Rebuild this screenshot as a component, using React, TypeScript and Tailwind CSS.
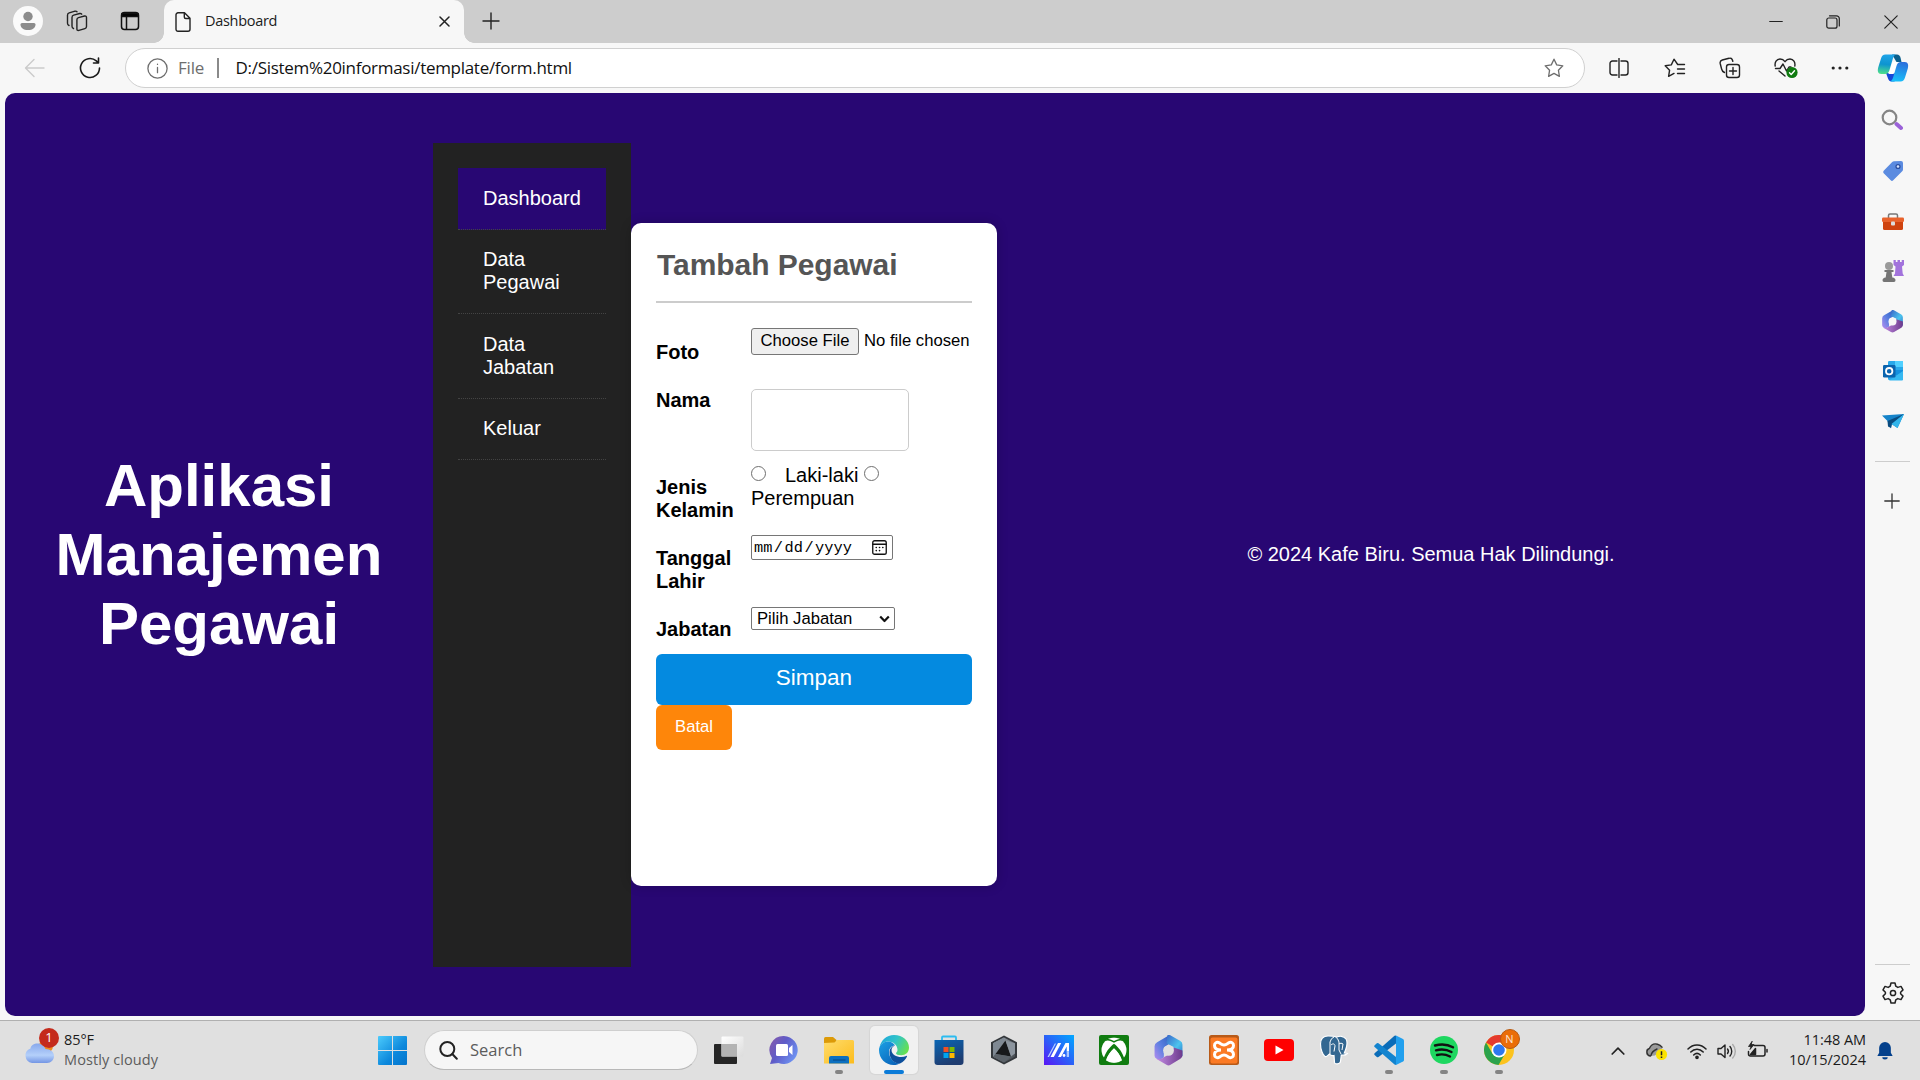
import React from "react";

const ui = "font-['Open_Sans',sans-serif]";
const arial = "font-['Liberation_Sans',sans-serif]";

type IconProps = { w?: number; h?: number; vb?: string; className?: string; sw?: number; color?: string; children: React.ReactNode };
function Line({ w = 24, h, vb = "0 0 24 24", className = "", sw = 1.4, color = "#222", children }: IconProps) {
  return (
    <svg width={w} height={h ?? w} viewBox={vb} className={`shrink-0 ${className}`} fill="none" stroke={color} strokeWidth={sw} strokeLinecap="round" strokeLinejoin="round">
      {children}
    </svg>
  );
}
function Pic({ w = 30, vb = "0 0 30 30", className = "", children }: IconProps) {
  return (
    <svg width={w} height={w} viewBox={vb} className={`shrink-0 ${className}`}>
      {children}
    </svg>
  );
}

function TabBar() {
  return (
    <div className="flex h-[43px] w-full bg-[#cdcdcd]">
      <div className="flex w-[164px] items-center pb-px pl-[13px]">
        <Pic w={30}>
          <circle cx="15" cy="15" r="15" fill="#fafafa" />
          <circle cx="15" cy="10.500" r="4.700" fill="#8c8c8c" />
          <path d="M7.500 18.500a1.500 1.500 0 0 1 1.500-1.500h12a1.500 1.500 0 0 1 1.500 1.500c0 3.500-3 5.500-7.500 5.500s-7.500-2-7.500-5.500z" fill="#8c8c8c" />
        </Pic>
        <Line w={22} vb="0 0 22 22" className="ml-[23px]" sw={1.400}>
          <path d="M12.500 7.600l6-1.600q2-.4 2 1.600v8.800q0 1.700-1.600 2.200l-6 1.800q-2 .5-2-1.500V9.800q0-1.700 1.600-2.200z" />
          <path d="M7.500 18.500q-1.500-.5-1.500-2.200V7.500q0-1.800 1.700-2.300l6-1.700q1.300-.3 2 .7" />
          <path d="M3 15.500q-1.500-.6-1.500-2.300V5.200q0-1.800 1.700-2.300l5.800-1.700q1.300-.3 2 .5" />
        </Line>
        <Line w={20} vb="0 0 20 20" className="ml-[32px]" sw={1.500} color="#111">
          <rect x="1.500" y="1.500" width="17" height="17" rx="3" />
          <path d="M2 2.500h16v3h-16z" fill="#000" />
          <path d="M6.500 6v12" />
        </Line>
      </div>
      <div className="relative flex w-[300px] items-center rounded-t-[10px] bg-[#f7f7f7] pr-[14px] pl-[11px]">
        <span className="absolute bottom-0 -left-[10px] size-[10px] bg-[radial-gradient(circle_at_0_0,#cdcdcd_9.500px,#f7f7f7_10px)]" />
        <span className="absolute -right-[10px] bottom-0 size-[10px] bg-[radial-gradient(circle_at_100%_0,#cdcdcd_9.500px,#f7f7f7_10px)]" />
        <Line w={16} h={20} vb="0 0 16 20" sw={1.400}>
          <path d="M3 .8h6.500l5.500 5.500v11a2 2 0 0 1-2 2H3a2 2 0 0 1-2-2V2.800a2 2 0 0 1 2-2zM9.300 1v4a1.500 1.500 0 0 0 1.500 1.500h4" />
        </Line>
        <span className={`${ui} mb-[2px] ml-[14px] flex-1 text-[14.500px] leading-5 tracking-[-0.300px] text-[#1b1b1b]`}>Dashboard</span>
        <Line w={11} vb="0 0 11 11" sw={1.500}>
          <path d="M1 1l9 9M10 1l-9 9" />
        </Line>
      </div>
      <div className="flex flex-1 items-center pb-[2px] pl-[18px]">
        <Line w={18} vb="0 0 18 18" sw={1.400}>
          <path d="M9 1v16M1 9h16" />
        </Line>
      </div>
      <div className="flex items-center pr-[22px]">
        <Line w={14} vb="0 0 14 14" sw={1.100} className="mr-[43px]">
          <path d="M.7 6.500h12.600" />
        </Line>
        <Line w={14} vb="0 0 14 14" sw={1.200} className="mr-[44px]">
          <rect x=".8" y="3" width="10.200" height="10.200" rx="2" />
          <path d="M3.500.8h7a2.800 2.800 0 0 1 2.800 2.800V11" />
        </Line>
        <Line w={14} vb="0 0 14 14" sw={1.200}>
          <path d="M.8.8l12.400 12.400M13.200.8L.8 13.200" />
        </Line>
      </div>
    </div>
  );
}

const STAR = "M10 1.200l2.700 5.700 6.100.9-4.400 4.400 1 6.200L10 15.400l-5.400 3 1-6.200L1.200 7.800l6.100-.9z";

function Toolbar() {
  return (
    <div className="flex h-[50px] w-full items-center bg-[#f7f7f7]">
      <div className="flex w-[125px] items-center pb-px pl-6">
        <Line w={22} vb="0 0 22 22" color="#cbcbcb">
          <path d="M20 11H2M10 2.500L1.500 11l8.500 8.500" />
        </Line>
        <Line w={22} vb="0 0 22 22" className="ml-[33px]" sw={1.600} color="#1b1b1b">
          <path d="M20.500 11a9.500 9.500 0 1 1-3.200-7.100l1.700 1.600M19.500 1v5h-5" />
        </Line>
      </div>
      <div className="flex h-10 w-[1460px] items-center rounded-full border border-[#d0d0d0] bg-white pr-[20px] pl-[21px]">
        <Line w={21} vb="0 0 21 21" sw={1.300} color="#6e6e6e">
          <circle cx="10.500" cy="10.500" r="9.600" />
          <path d="M10.500 9.500v5.200M10.500 6.200v.2" />
        </Line>
        <span className={`${ui} mb-px ml-[10px] w-[39px] text-[17px] tracking-[-0.200px] text-[#6e6e6e]`}>File</span>
        <span className="h-5 w-[1.500px] bg-[#8a8a8a]" />
        <span className={`${ui} mb-px ml-[17px] flex-1 text-[17px] tracking-[-0.290px] text-[#111]`}>D:/Sistem%20informasi/template/form.html</span>
        <Line w={20} vb="0 0 20 20" color="#6e6e6e" sw={1.300}>
          <path d={STAR} />
        </Line>
      </div>
      <div className="flex flex-1 items-center pb-px pl-[24px]">
        <Line w={20} vb="0 0 20 20">
          <path d="M8 3H3.500a2.500 2.500 0 0 0-2.500 2.500v9A2.500 2.500 0 0 0 3.500 17H8M12 3h4.500A2.500 2.500 0 0 1 19 5.500v9a2.500 2.500 0 0 1-2.500 2.500H12M10 .5v19" />
        </Line>
        <Line w={22} vb="0 0 22 20" className="ml-[35px]">
          <path d="M20.500 6.500h-6.800L10 1.200 7.300 6.900l-6.100.9 4.400 4.400-1 6.200 5.400-3M13.500 11h7M13.500 15.500h7" />
        </Line>
        <Line w={22} vb="0 0 22 22" className="ml-[33px]">
          <path d="M5.500 15.500C3.500 14.500 3 14 2.600 12L1.200 6.500C.8 4.500 1.500 3.500 3.300 3L10 1.300c1.800-.5 3 .2 3.500 2l.3 1" />
          <rect x="7.500" y="7.500" width="13" height="13" rx="2.500" />
          <path d="M14 10.500v7M10.500 14h7" />
        </Line>
        <Line w={24} vb="0 0 24 22" className="ml-[33px]">
          <path d="M1.200 9C.5 5.500 2.500 2 6 2c2.200 0 3.800 1 5 2.700C12.200 3 13.800 2 16 2c3.500 0 5.500 3.500 4.800 7M1.500 11.500h4.500L9 7l3.500 7 2.500-4h2M5 14l6 5" />
          <circle cx="18" cy="15.500" r="5.600" fill="#0f7b10" stroke="none" />
          <path d="M15.500 15.800l1.700 1.700 3.300-3.700" stroke="#fff" />
        </Line>
        <Pic w={18} vb="0 0 18 18" className="ml-[33px]">
          <circle cx="2.200" cy="9" r="1.600" fill="#222" />
          <circle cx="9" cy="9" r="1.600" fill="#222" />
          <circle cx="15.800" cy="9" r="1.600" fill="#222" />
        </Pic>
        <Copilot />
      </div>
    </div>
  );
}

function Copilot() {
  return (
    <svg width="32" height="28" viewBox="0 0 32 28" className="ml-[28px] shrink-0">
      <defs>
        <linearGradient id="cpA" x1=".4" y1="0" x2=".3" y2="1">
          <stop offset="0" stopColor="#1fa4e8" />
          <stop offset=".5" stopColor="#0d94d0" />
          <stop offset="1" stopColor="#4fe08a" />
        </linearGradient>
        <linearGradient id="cpB" x1=".6" y1="0" x2=".4" y2="1">
          <stop offset="0" stopColor="#2a6fdc" />
          <stop offset="1" stopColor="#18c0fa" />
        </linearGradient>
      </defs>
      <path d="M15 .5h5c2 0 3 1.200 3.600 3.500L24.500 8h-5z" fill="#0b5f8c" />
      <path d="M9 19l2 5.500c.7 2 1.800 3 3.500 3h3l3-8z" fill="#1648d8" />
      <path d="M15.500 8h5l-4 12h-5z" fill="#fff" />
      <path d="M8.500.5h10.200c-1.500.8-2.200 2.200-2.800 4L12.500 16c-.8 2.800-2 4-4.500 4H4.200C.8 20 .3 17 1.200 13.500L4 4.500C4.800 1.800 6 .5 8.500.5z" fill="url(#cpA)" />
      <path d="M23.500 27.500H13.300c1.500-.8 2.200-2.200 2.800-4L19.500 12c.8-2.800 2-4 4.500-4h3.800c3.400 0 3.900 3 3 6.500L28 23.500c-.8 2.700-2 4-4.500 4z" fill="url(#cpB)" />
    </svg>
  );
}

function Loop365({ w = 22, id, hole }: { w?: number; id: string; hole: string }) {
  return (
    <svg width={w} height={w} viewBox="0 0 30 30" className="shrink-0">
      <defs>
        <linearGradient id={`${id}a`} x1="1" y1="0" x2="0" y2="1">
          <stop offset="0" stopColor="#2c5fc0" />
          <stop offset=".5" stopColor="#5a7fe0" />
          <stop offset="1" stopColor="#b58cf0" />
        </linearGradient>
        <linearGradient id={`${id}b`} x1="0" y1="0" x2="1" y2="1">
          <stop offset="0" stopColor="#3a66c8" />
          <stop offset=".6" stopColor="#4cc4ee" />
          <stop offset="1" stopColor="#2c74c8" />
        </linearGradient>
        <linearGradient id={`${id}c`} x1="0" y1="0" x2="1" y2="0">
          <stop offset="0" stopColor="#c48ce4" />
          <stop offset="1" stopColor="#6c3a8c" />
        </linearGradient>
      </defs>
      <path d="M16 0L4 7Q1.500 8.500 1.500 11v9q0 2 2 3l3 1.500 4-3V12l6-4z" fill={`url(#${id}a)`} />
      <path d="M14 0q2-.3 4 .9l8.500 5q2 1.300 2 3.600v11L20 16v-4.500L13 8z" fill={`url(#${id}b)`} />
      <path d="M28.500 15v4.500q0 2.300-2 3.500L17 28.800q-2 1.200-4 0L3 23q5 1 7.500-1.500l9-5L20 12z" fill={`url(#${id}c)`} />
      <circle cx="15" cy="15" r="5.200" fill={hole} />
    </svg>
  );
}

function EdgeSidebar() {
  return (
    <aside className="flex w-[55px] flex-col items-center bg-[#f7f7f7] pt-[16px]">
      <Pic w={22} vb="0 0 22 22" className="-ml-px">
        <circle cx="8.500" cy="8.500" r="6.800" fill="none" stroke="#858585" strokeWidth="2.200" />
        <path d="M15.500 15l4.500 4" stroke="#9b62d8" strokeWidth="4" strokeLinecap="round" />
      </Pic>
      <Pic w={22} vb="0 0 22 22" className="mt-[29px]">
        <path d="M12 1.200L19 1q2 0 2 2v6.500q0 1-.8 1.800l-9 9q-1.200 1.200-2.500 0l-7-7q-1.200-1.300 0-2.500l8.500-8.800q.8-.8 1.800-.8z" fill="#5b8be0" />
        <circle cx="16" cy="6.500" r="2.600" fill="#2c4fa0" />
        <circle cx="16" cy="6.500" r="1.300" fill="#d7e4ff" />
      </Pic>
      <Pic w={22} vb="0 0 22 22" className="mt-[29px]">
        <path d="M6.500 7V4.500Q6.500 3 8 3h6q1.500 0 1.500 1.500V7" fill="none" stroke="#777" strokeWidth="1.500" />
        <rect y="6.500" width="22" height="4.500" rx="1.200" fill="#e8622c" />
        <path d="M1 11h20v6.500q0 1.500-1.500 1.500h-17Q1 19 1 17.500z" fill="#cf430f" />
        <rect x="9" y="10.500" width="4" height="4" rx="1" fill="#ddd" />
      </Pic>
      <Pic w={24} vb="0 0 24 24" className="mt-[26px]">
        <path d="M12.500 1h2.300v2h1.700V1h2.500v2h1.700V1H23v5l-2 1.500.7 7L23 17H12.500l1.500-2.500.5-7-2-1.500z" fill="#a273dc" />
        <circle cx="8" cy="7" r="4" fill="#9a9a9a" />
        <path d="M3.500 11h9v2h-2l.8 5.500q3.200.5 3.200 2.700Q14.500 23 13 23H3q-1.500 0-1.500-1.800 0-2.200 3.200-2.700L5.500 13h-2z" fill="#757575" />
      </Pic>
      <div className="mt-[27px]">
        <Loop365 w={23} id="s" hole="#f7f7f7" />
      </div>
      <Pic w={22} vb="0 0 22 22" className="mt-[27px]">
        <rect x="6" y="1" width="15" height="19" rx="1.200" fill="#28a8ea" />
        <path d="M13 1h8v6h-8z" fill="#50d0ff" />
        <path d="M6 10l15 10V10z" fill="#1490df" />
        <path d="M7 20.500L21 11v8.500q0 1-1 1z" fill="#35b8f1" />
        <rect x="1" y="5" width="12.500" height="12.500" rx="1.200" fill="#0a64ae" />
        <circle cx="7.200" cy="11.200" r="3.200" fill="none" stroke="#fff" strokeWidth="1.800" />
      </Pic>
      <Pic w={22} vb="0 0 22 22" className="mt-[28px]">
        <path d="M0 5.500L22 4l-6.500 14-6-4L9 18.500 5.500 11z" fill="#1583c9" />
        <path d="M22 4L5.500 11 6 16.500l3 1.500 1-4z" fill="#0a4c80" />
        <path d="M22 4l-6.500 14-6-4z" fill="#32b4ea" />
      </Pic>
      <div className="mt-[29px] h-px w-[35px] bg-[#cdcdcd]" />
      <Line w={16} vb="0 0 16 16" sw={1.300} className="mt-[31px] -ml-[2px]" color="#333">
        <path d="M8 .8v14.400M.8 8h14.400" />
      </Line>
      <div className="mt-auto h-px w-[35px] bg-[#cdcdcd]" />
      <Line w={22} vb="0 0 22 22" className="mt-[17px] mb-[16px]" sw={1.500}>
        <path d="M9 1h4l.8 3.200 2 1.200 3.200-1 2 3.500-2.400 2.300v1.600l2.400 2.300-2 3.500-3.200-1-2 1.200L13 21H9l-.8-3.200-2-1.200-3.200 1-2-3.500 2.400-2.300v-1.600L1 7.900l2-3.500 3.200 1 2-1.200z" />
        <circle cx="11" cy="11" r="2.600" />
      </Line>
    </aside>
  );
}

const MENU = ["Dashboard", "Data Pegawai", "Data Jabatan", "Keluar"];

function Label({ children, className = "" }: { children: React.ReactNode; className?: string }) {
  return <div className={`w-[95px] shrink-0 text-[20px] leading-[23px] font-bold text-black ${className}`}>{children}</div>;
}
function Radio({ className = "" }: { className?: string }) {
  return <span className={`inline-block size-[15px] shrink-0 rounded-full border border-[#6f6f6f] bg-white ${className}`} />;
}

function FormCard() {
  return (
    <section className="flex h-[663px] w-[366px] flex-col rounded-[10px] bg-white px-[25px] shadow-[0_0_12px_rgba(0,0,0,0.200)]">
      <h2 className="mt-[25px] h-[53px] pl-[1px] text-[30px] leading-[33px] font-bold tracking-[-0.050px] text-[#555]">Tambah Pegawai</h2>
      <div className="h-[2px] shrink-0 bg-[#ccc]" />
      <div className="flex h-[86px] shrink-0">
        <Label className="pt-[38px]">Foto</Label>
        <div className="flex pt-[25px] text-[16.670px] leading-[25px] whitespace-nowrap text-black">
          <span className="mr-[5px] h-[27px] w-[108px] rounded-[3px] border border-[#767676] bg-[#efefef] text-center leading-[24px]">Choose File</span>
          <span>No file chosen</span>
        </div>
      </div>
      <div className="flex h-[76px] shrink-0">
        <Label>Nama</Label>
        <div className="h-[62px] w-[158px] rounded-[5px] border border-[#ccc]" />
      </div>
      <div className="flex h-[70px] shrink-0 text-black">
        <Label className="pt-[11px]">
          Jenis
          <br />
          Kelamin
        </Label>
        <div className="-mt-px text-[20px] leading-[23px]">
          <div className="flex whitespace-nowrap">
            <Radio className="mt-[2px] mr-[19px]" />
            Laki-laki
            <Radio className="mt-[2px] ml-[6px]" />
          </div>
          <div>Perempuan</div>
        </div>
      </div>
      <div className="flex h-[72px] shrink-0">
        <Label className="pt-[12px]">
          Tanggal
          <br />
          Lahir
        </Label>
        <div className="flex h-[25px] w-[142px] items-center justify-between rounded-[2px] border border-[#767676] pr-[5px] pl-[2px] text-black">
          <span className="flex gap-[1.500px] pt-px font-['Liberation_Mono',monospace] text-[15.300px] leading-[22px]">
            <span>mm</span>
            <span>/</span>
            <span>dd</span>
            <span>/</span>
            <span>yyyy</span>
          </span>
          <Line w={15} vb="0 0 16 16" sw={1.400} color="#111">
            <rect x=".8" y=".8" width="14.400" height="14.400" rx="2" />
            <path d="M1 4.500h14" />
            <path d="M4.500 11.300h.1M8 8h.1M11.500 8h.1M4.500 8h.1M8 11.300h.1" strokeWidth="1.700" />
          </Line>
        </div>
      </div>
      <div className="flex h-[47px] shrink-0">
        <Label className="pt-[11px]">Jabatan</Label>
        <div className="flex h-[23px] w-[144px] items-center justify-between rounded-[2px] border border-[#767676] pr-[4px] pl-[5px] text-[16.670px] leading-[21px] text-black">
          <span className="whitespace-nowrap">Pilih Jabatan</span>
          <Line w={11} h={8} vb="0 0 11 8" sw={2.200} color="#111">
            <path d="M1.200 1.500l4.300 4.500 4.300-4.500" strokeLinecap="butt" />
          </Line>
        </div>
      </div>
      <div className="h-[51px] shrink-0 rounded-[6px] bg-[#048ae0] pt-[11px] text-center text-[22.500px] leading-[26px] text-white">Simpan</div>
      <div className="h-[45px] w-[76px] shrink-0 rounded-[6px] bg-[#fe860a] pt-[12px] text-center text-[16.670px] leading-[19px] text-white">Batal</div>
    </section>
  );
}

function PageView() {
  return (
    <div className={`${arial} flex h-[923px] w-[1860px] items-center overflow-hidden rounded-[10px] bg-[#280773]`}>
      <h1 className="w-[428px] px-[50px] text-center text-[60px] leading-[69px] font-bold text-white">Aplikasi Manajemen Pegawai</h1>
      <nav className="mt-px h-[824px] w-[198px] bg-[#222] p-[25px]">
        {MENU.map((m, i) => (
          <div
            key={m}
            className={
              "border-b border-dotted border-[#444] px-[25px] py-[18.750px] text-[20px] leading-[23px] text-white " + (i === 0 ? "bg-[#280773]" : "")
            }
          >
            {m}
          </div>
        ))}
      </nav>
      <FormCard />
      <footer className="flex-1 text-center text-[20px] leading-[23px] text-white">© 2024 Kafe Biru. Semua Hak Dilindungi.</footer>
    </div>
  );
}

function TaskIcons() {
  const items: { icon: React.ReactNode; mark?: "active" | "open" }[] = [
    {
      icon: (
        <Pic>
          <defs>
            <linearGradient id="tv" x1="0" y1="0" x2="1" y2="1">
              <stop offset="0" stopColor="#fff" />
              <stop offset="1" stopColor="#dcdcdc" />
            </linearGradient>
          </defs>
          <rect x="0" y="9" width="23" height="20" rx="1" fill="#262626" />
          <rect x="7.500" y="1.500" width="22" height="20" rx="1" fill="url(#tv)" />
          <path d="M7.500 9H23v12.500H7.500z" fill="#b3b3b3" />
        </Pic>
      ),
    },
    {
      icon: (
        <Pic>
          <defs>
            <linearGradient id="ch" x1="0" y1="0" x2="1" y2=".6">
              <stop offset="0" stopColor="#8a5aa8" />
              <stop offset=".5" stopColor="#5f5cc8" />
              <stop offset="1" stopColor="#6d90f0" />
            </linearGradient>
          </defs>
          <path d="M15 1a14 14 0 1 1-5.500 27L1 29l2-6A14 14 0 0 1 15 1z" fill="url(#ch)" />
          <rect x="7" y="9" width="12" height="12" rx="1.500" fill="#fff" />
          <path d="M20 13l3.500-3v10L20 17z" fill="#fff" />
        </Pic>
      ),
    },
    {
      mark: "open",
      icon: (
        <Pic>
          <defs>
            <linearGradient id="fo" x1="0" y1="0" x2="1" y2="1">
              <stop offset="0" stopColor="#ffdc6c" />
              <stop offset="1" stopColor="#fcbc1c" />
            </linearGradient>
          </defs>
          <path d="M0 3.500Q0 2 1.500 2H9l3.500 3v5H0z" fill="#dc9a08" />
          <path d="M0 8l10.500-.5L13 5h15.500Q30 5 30 6.500V28.500H0z" fill="url(#fo)" />
          <path d="M5 28.500V23q0-2 2-2h16q2 0 2 2v5.500z" fill="#0c70c0" />
          <path d="M9 25h12.500" stroke="#084f90" strokeWidth="1.300" />
        </Pic>
      ),
    },
    {
      mark: "active",
      icon: (
        <Pic>
          <defs>
            <linearGradient id="eg1" x1="0" y1=".2" x2="1" y2=".6">
              <stop offset="0" stopColor="#1fa6dc" />
              <stop offset=".5" stopColor="#30c4c8" />
              <stop offset="1" stopColor="#66e050" />
            </linearGradient>
            <linearGradient id="eg2" x1="0" y1="0" x2=".7" y2="1">
              <stop offset="0" stopColor="#1ba0e4" />
              <stop offset="1" stopColor="#0a66bc" />
            </linearGradient>
          </defs>
          <path d="M.5 12.500C2 5 7.500 0 15 0c9 0 15 6 15 12.500 0 5-3.500 7.700-7.700 7.700-3.500 0-5.300-1-5.300-2 0-.7 1.500-1.200 1.500-3.200C18.500 10 14 6.500 9.500 6.500 5 6.500 2 9 .5 12.500z" fill="url(#eg1)" />
          <path d="M10 17c0-4 3-6.500 6-6.500-1-2-4-4-7-4C3.500 6.500 0 11 0 15c0 8.500 6.500 15 14.500 15 3 0 5-.7 6.500-1.500C15 28.500 10 23 10 17z" fill="url(#eg2)" />
          <path d="M16 10.500c-3 .5-5.500 3-5.500 7 0 6 4.500 11.500 10.500 11 3-1.500 6-4.500 7-7 .2-.6-.3-.8-.8-.5C22 23.500 12.500 21.500 12.500 15c0-2 1.500-4 3.500-4.500z" fill="#0d4f9c" />
        </Pic>
      ),
    },
    {
      icon: (
        <Pic>
          <path d="M8 6V2.500Q8 1.500 9 1.500h12q1 0 1 1V6" fill="none" stroke="#2cbcf0" strokeWidth="1.800" />
          <defs>
            <linearGradient id="st" x1="0" y1="0" x2=".4" y2="1">
              <stop offset="0" stopColor="#0a66b4" />
              <stop offset="1" stopColor="#1e3c70" />
            </linearGradient>
          </defs>
          <path d="M.5 5h29v22q0 3-3 3h-23q-3 0-3-3z" fill="url(#st)" />
          <path d="M9.500 12h5v5h-5z" fill="#f25022" />
          <path d="M15.500 12h5v5h-5z" fill="#7fba00" />
          <path d="M9.500 18h5v5h-5z" fill="#00a4ef" />
          <path d="M15.500 18h5v5h-5z" fill="#ffb900" />
        </Pic>
      ),
    },
    {
      icon: (
        <Pic>
          <defs>
            <linearGradient id="ar" x1="0" y1="0" x2="1" y2="1">
              <stop offset="0" stopColor="#a4adb6" />
              <stop offset="1" stopColor="#3b4045" />
            </linearGradient>
          </defs>
          <path d="M15 .5l13 6.800v15.400l-13 6.800L2 22.700V7.300z" fill="#34383c" />
          <path d="M15 2.500l11 5.800v13.400l-11 5.800-11-5.800V8.300z" fill="url(#ar)" />
          <path d="M15 2.500V6L7 20.500 4 21.700V8.300z" fill="#7f8993" />
          <path d="M16.500 5.500l5.500 16-15.500-2.500z" fill="#17191b" />
          <path d="M16.500 5.500L26 8.300v10.200L22 21.500z" fill="#8c959e" />
          <path d="M6.500 19l15.500 2.500-7 6-11-5.800z" fill="#5b6269" />
        </Pic>
      ),
    },
    {
      icon: (
        <Pic>
          <defs>
            <linearGradient id="ma" x1="1" y1="0" x2="0" y2="1">
              <stop offset="0" stopColor="#00a8ff" />
              <stop offset=".5" stopColor="#2a62f8" />
              <stop offset="1" stopColor="#5a14f4" />
            </linearGradient>
          </defs>
          <path d="M0 0h30v30H0z" fill="url(#ma)" />
          <path d="M10.800 8.500h1.200L5 22H3.500z" fill="#b9d0ff" />
          <path d="M14 8h3.200L9.800 22H6.500z" fill="#fff" />
          <path d="M21.500 8H25v8.500h-2.300V11.500L17 22h-3z" fill="#fff" />
          <path d="M22.700 16.500H25V22h-2.300z" fill="#a9c6ff" />
          <circle cx="20" cy="20.500" r="1.400" fill="#fff" />
        </Pic>
      ),
    },
    {
      icon: (
        <Pic>
          <rect width="30" height="30" rx="2" fill="#107c10" />
          <circle cx="15" cy="15" r="12.500" fill="#fff" />
          <path d="M4.500 24.500C6 18 10.500 12 15 8.800c4.500 3.200 9 9.200 10.500 15.700l-2.700 1c-1-4.500-4.500-9.500-7.800-12.300-3.300 2.800-6.800 7.800-7.800 12.300z" fill="#107c10" />
          <path d="M6 6c3-1.500 6.500 0 9 1.800C17.500 6 21 4.500 24 6l-3-3.800H9z" fill="#107c10" />
          <path d="M9 3.800Q12.500 4.500 15 6q2.500-1.500 6-2.200-6-2.300-12 0z" fill="#fff" />
          <path d="M7 25.500q2-6.500 8-12 6 5.500 8 12-3.500 2.200-8 2.200t-8-2.200z" fill="#fff" />
        </Pic>
      ),
    },
    { icon: <Loop365 w={31} id="t" hole="#e0e0e0" /> },
    {
      icon: (
        <Pic>
          <rect width="30" height="30" rx="2.500" fill="#b85a18" />
          <rect x="1.500" y="2.500" width="27" height="26" rx="2" fill="#fb7a24" />
          <path d="M12 15c-5 0-6.500-2-6.500-4.500S7.500 7 9.500 7.500 12 10 15 10s3.500-2 5.500-2.500 4 .5 4 3-1.500 4.500-6.500 4.500c5 0 6.500 2 6.500 4.500s-2 3.500-4 3S18 20 15 20s-3.500 2-5.500 2.500-4-.5-4-3S7 15 12 15z" fill="none" stroke="#fff" strokeWidth="3" />
        </Pic>
      ),
    },
    {
      icon: (
        <Pic>
          <rect y="4" width="30" height="22" rx="4" fill="#f00" />
          <path d="M11.500 10.500l8 4.500-8 4.500z" fill="#fff" />
        </Pic>
      ),
    },
    {
      icon: (
        <Pic>
          <path d="M9 1C4 1 1.500 4 1.500 9s2 11 4.500 12.500c2 1 3-1.500 4.500-2.500 1 1.500 2.500 2 4.500 1.500l.5 7c.2 2 5.500 2 6-1l.8-6.500c2.500.5 5-.3 6-1.500l-3-.5C27.500 13 29 7 27 4c-2.500-3.500-7-3-9-2-3-1-6-1-9-1z" fill="#336791" stroke="#fff" strokeWidth="1.200" />
          <path d="M11 19V7q1-4 4-5M22 19l-2-4V7q-1-4-3.500-5M12 10c2-2 4-1 4 1l-1 5.500M20 9c1-1 3-1 4 0l-1 6" fill="none" stroke="#fff" strokeWidth="1" />
        </Pic>
      ),
    },
    {
      mark: "open",
      icon: (
        <Pic>
          <path d="M22 .5L29 4q1 .5 1 1.500V25q0 1-1 1.500L22 30z" fill="#22a0ee" />
          <path d="M22 .5v8L4.500 22q-1 .6-1.700 0l-2.200-2q-.8-1 0-1.800L20.500.8z" fill="#0a6cb8" />
          <path d="M22 30v-8L4.500 8.300q-1-.6-1.700 0L.6 10.300q-.8 1 0 1.800l19.900 17.500z" fill="#1384cf" />
        </Pic>
      ),
    },
    {
      mark: "open",
      icon: (
        <Pic>
          <circle cx="15" cy="15" r="14" fill="#1ed760" />
          <path d="M6 10.500c6-1.700 13-1 18 1.800M7 15.300c5-1.400 11-.8 15.500 1.700M8 20c4.500-1.200 9-.7 13 1.500" fill="none" stroke="#111" strokeWidth="2.400" strokeLinecap="round" />
        </Pic>
      ),
    },
    {
      mark: "open",
      icon: (
        <div className="relative">
          <Pic>
            <circle cx="15" cy="15" r="15" fill="#fcc31e" />
            <path d="M15 15L2 7.500A15 15 0 0 1 28 7.500H15z" fill="#e53a2e" />
            <path d="M2 7.500A15 15 0 0 0 14.500 30L21.500 18 15 15 8.500 18.700z" fill="#2ba24c" />
            <circle cx="15" cy="15" r="7.500" fill="#fff" />
            <circle cx="15" cy="15" r="5.800" fill="#2f78ee" />
          </Pic>
          <span className={`${ui} absolute -top-[6px] -right-[6px] flex size-[20px] items-center justify-center rounded-full border border-[#b85a10] bg-[#ea6d08] text-[11px] text-[#ffe6d0]`}>
            N
          </span>
        </div>
      ),
    },
  ];
  return (
    <div className="flex">
      {items.map((it, i) => (
        <div key={i} className="flex h-[59px] w-[55px] justify-center pt-[5px]">
          <div
            className={
              "relative flex size-[48px] justify-center pt-[9px] " + (it.mark === "active" ? "rounded-[5px] bg-[#f1f1f1] shadow-[0_0_1px_1px_rgba(0,0,0,0.050)]" : "")
            }
          >
            {it.icon}
            {it.mark === "active" && <span className="absolute bottom-0 h-[4px] w-5 rounded-full bg-[#0b7bd8]" />}
            {it.mark === "open" && <span className="absolute bottom-0 h-[4px] w-2 rounded-full bg-[#848484]" />}
          </div>
        </div>
      ))}
    </div>
  );
}

function Taskbar() {
  return (
    <div className={`${ui} flex h-[60px] w-full border-t border-[#b0b0b0] bg-[#e0e0e0]`}>
      <div className="flex w-[378px] pl-[24px]">
        <div className="relative w-[40px]">
          <svg width="32" height="30" viewBox="0 0 32 30" className="mt-[13px] -ml-px">
            <defs>
              <linearGradient id="cl" x1="0" y1="0" x2="0" y2="1">
                <stop offset="0" stopColor="#88a8ec" />
                <stop offset=".6" stopColor="#b4d0fa" />
                <stop offset="1" stopColor="#7496e4" />
              </linearGradient>
            </defs>
            <circle cx="23" cy="12" r="7" fill="#f08a1c" />
            <path d="M9 29a7.500 7.500 0 0 1-1.500-14.500C8 11 11 9.500 14.500 9.500c4 0 7 2.500 8 5.500 5 0 8.500 3 8.500 7s-3 7-7 7z" fill="url(#cl)" />
          </svg>
          <span className="absolute top-[7px] left-[15px] flex size-[20px] items-center justify-center rounded-full bg-[#c42b1c] text-[13px] text-white">1</span>
        </div>
        <div className="pt-[9px] text-[14.500px] leading-[20px] tracking-[0.100px]">
          <div className="tracking-[-0.100px] text-[#1b1b1b]">85°F</div>
          <div className="text-[#5c5c5c]">Mostly cloudy</div>
        </div>
      </div>
      <svg width="29" height="29" viewBox="0 0 29 29" className="mt-[15px] mr-[17px] shrink-0">
        <defs>
          <linearGradient id="wi" gradientUnits="userSpaceOnUse" x1="0" y1="0" x2="29" y2="29">
            <stop offset="0" stopColor="#4ccbfc" />
            <stop offset=".6" stopColor="#0c88dc" />
            <stop offset="1" stopColor="#0474cc" />
          </linearGradient>
        </defs>
        <path d="M1 0h13v14H0V1q0-1 1-1zM15 0h13q1 0 1 1v13H15zM0 15h14v14H1q-1 0-1-1zM15 15h14v13q0 1-1 1H15z" fill="url(#wi)" />
      </svg>
      <div className="mt-[9px] mr-[3px] flex h-[40px] w-[274px] shrink-0 items-center rounded-full border border-[#cfcfcf] border-b-[#b8b8b8] bg-[#f6f6f6] pl-[14px] text-[16.500px] text-[#5c5c5c]">
        <Line w={19} vb="0 0 19 19" sw={2} className="mr-[12px]">
          <circle cx="8.300" cy="8" r="7" />
          <path d="M13.300 13l4.500 4.800" />
        </Line>
        <span className="pt-px">Search</span>
      </div>
      <TaskIcons />
      <div className="ml-auto flex h-[59px] items-center pr-[26px]">
        <Line w={14} vb="0 0 14 14" sw={1.700} className="mr-[21px]">
          <path d="M1.200 10L7 4.200l5.800 5.800" />
        </Line>
        <Pic w={22} vb="0 0 22 22" className="mr-[19px]">
          <path d="M3.500 16A4 4 0 0 1 3.500 8C5 4.500 8 3 11.500 4c2.500.6 4.500 2.500 5 4L9 15.500z" fill="#9a9a9a" />
          <path d="M4.500 16A4 4 0 0 1 3.500 8.300C5 4.800 8 3.300 11.500 4.200c2 .5 3.500 1.600 4.500 3M5 15.500q.5-4 6-6.500" fill="none" stroke="#333" strokeWidth="1.400" strokeLinecap="round" />
          <circle cx="15.500" cy="14.500" r="5.600" fill="#fbe200" />
          <path d="M15.500 11.200v4M15.500 16.500v1.500" stroke="#222" strokeWidth="1.500" />
        </Pic>
        <Line w={20} vb="0 0 20 20" sw={1.500} className="mr-[10px]">
          <path d="M1 8c5-5.500 13-5.500 18 0M3.800 11c3.500-3.800 8.900-3.800 12.400 0M6.700 14c2-2 4.600-2 6.600 0" />
          <circle cx="10" cy="16.300" r="1.100" fill="#222" />
        </Line>
        <Line w={20} vb="0 0 20 20" sw={1.400} className="mr-[10px]">
          <path d="M1 7.500h3L8 4v12.500L4 13H1zM10.500 8c1 1.200 1 3.200 0 4.500M13 5.500c2.300 2.500 2.300 7 0 9.500" />
          <path d="M15.700 3.500c3.500 4 3.500 9.500 0 13.500" stroke="#aaa" />
        </Line>
        <Line w={21} vb="0 0 21 20" sw={1.500} className="mr-[20px]">
          <path d="M7 5h9q2 0 2 2v6.500q0 2-2 2H3.500q-2 0-2-2V11M20 9v2.500" />
          <path d="M3.500 14l5-6v6z" fill="#222" />
          <path d="M5 1L1.500 6H4L3 9l4-5H4.500z" fill="#222" strokeWidth=".8" />
        </Line>
        <div className="mr-[10px] w-[78px] pb-[2px] text-right text-[14.500px] leading-[20px] whitespace-nowrap text-[#1b1b1b]">
          <div className="tracking-[-0.050px]">11:48 AM</div>
          <div>10/15/2024</div>
        </div>
        <Pic w={18} vb="0 0 18 20">
          <path d="M9 0a6.500 6.500 0 0 1 6.500 6.500V12l2 3.500H.5l2-3.500V6.500A6.500 6.500 0 0 1 9 0zM6 17h6a3 2.500 0 0 1-6 0z" fill="#03408c" />
        </Pic>
      </div>
    </div>
  );
}

export default function App() {
  return (
    <div className="flex h-[1080px] w-[1920px] flex-col overflow-hidden bg-[#f7f7f7]">
      <TabBar />
      <Toolbar />
      <div className="flex h-[927px] w-full justify-end">
        <PageView />
        <EdgeSidebar />
      </div>
      <Taskbar />
    </div>
  );
}
